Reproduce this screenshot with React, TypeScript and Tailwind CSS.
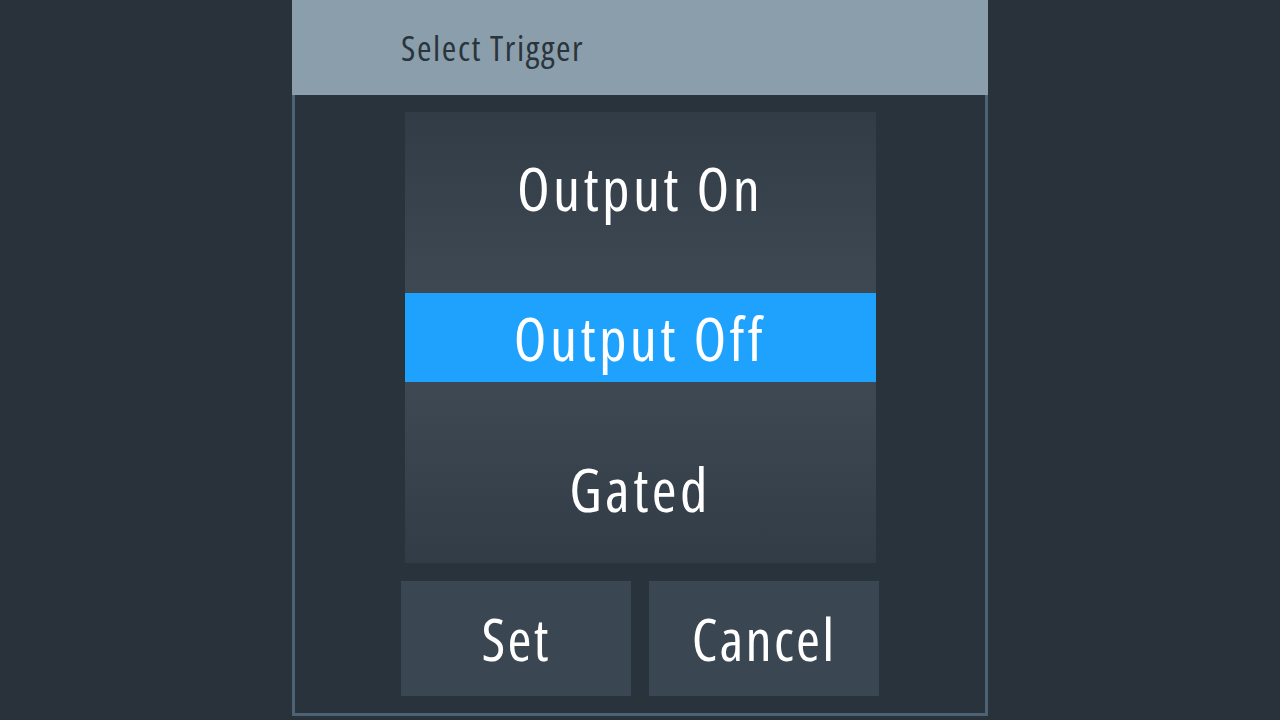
const font = { fontFamily: '"Open Sans", "Noto Sans", sans-serif' };

export default function App() {
  return (
    <div
      className="w-[1280px] h-[720px] bg-[#29323a] flex justify-center overflow-hidden"
      style={font}
    >
      <div className="w-[696px] h-[716px] flex flex-col">
        <div className="h-[95px] bg-[#8a9eab] flex items-center pl-[109px]">
          <span className="text-[35px] font-stretch-condensed tracking-[1.6px] text-[#2a343c] leading-none -mt-[1px]">
            Select Trigger
          </span>
        </div>
        <div className="flex-1 bg-[#29333b] border-[3px] border-t-0 border-[#4d6374] flex flex-col items-center pt-[17px]">
          <div className="w-[471px] h-[451px] flex flex-col bg-[linear-gradient(to_bottom,#323c46_0%,#3d4853_38%,#3d4853_62%,#323c46_100%)] text-white text-[60px] font-stretch-condensed font-normal tracking-[3.4px] leading-none">
            <div className="h-[181px] flex items-center justify-center pb-[29px]">Output On</div>
            <div className="h-[89px] bg-[#1fa2fe] flex items-center justify-center">Output Off</div>
            <div className="h-[181px] flex items-center justify-center pt-[32px]">Gated</div>
          </div>
          <div className="flex gap-[18px] mt-[18px]">
            <div className="w-[230px] h-[115px] bg-[#3a4652] flex items-center justify-center text-white text-[58px] font-stretch-condensed font-normal tracking-[2.2px] leading-none">
              Set
            </div>
            <div className="w-[230px] h-[115px] bg-[#3a4652] flex items-center justify-center text-white text-[58px] font-stretch-condensed font-normal tracking-[2.2px] leading-none">
              Cancel
            </div>
          </div>
        </div>
      </div>
    </div>
  );
}
